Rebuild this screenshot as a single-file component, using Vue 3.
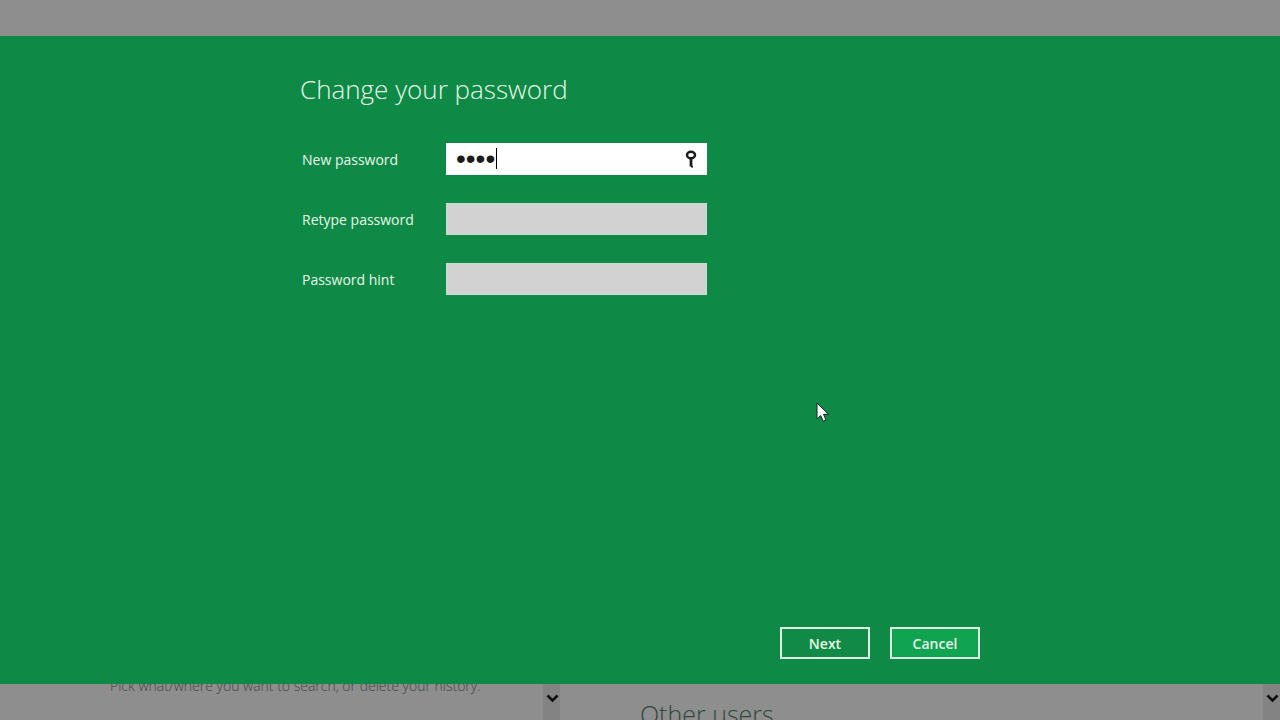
<script setup>
import { ref } from 'vue'

const password = ref('abcd')
const retype = ref('')
const hint = ref('')
</script>

<template>
  <div class="screen">
    <main class="dialog">
      <form class="content" @submit.prevent>
        <h1>Change your password</h1>
        <div class="row">
          <label for="new-password">New password</label>
          <div class="field">
            <input id="new-password" v-model="password" class="active" type="password" />
            <span class="caret"></span>
            <button class="reveal" type="button" aria-label="Show password">
              <svg width="12" height="18" viewBox="0 0 12 18" fill="none" stroke="#1c1c1c">
                <ellipse cx="6" cy="5" rx="4" ry="3.3" stroke-width="2.5" />
                <path d="M6 8V16.500" stroke-width="2.800" />
                <path d="M6 16.600H8" stroke-width="1.600" />
              </svg>
            </button>
          </div>
        </div>
        <div class="row">
          <label for="retype">Retype password</label>
          <div class="field"><input id="retype" v-model="retype" type="password" /></div>
        </div>
        <div class="row">
          <label for="hint">Password hint</label>
          <div class="field"><input id="hint" v-model="hint" type="text" /></div>
        </div>
        <div class="actions">
          <button class="action" type="submit">Next</button>
          <button class="action hover" type="button">Cancel</button>
        </div>
      </form>
    </main>
    <div class="behind">
      <section class="search-pane">
        <p>Pick what/where you want to search, or delete your history.</p>
      </section>
      <div class="scroll">
        <svg width="13" height="9" viewBox="0 0 13 9"><path d="M1.500 1.500L6.500 6.500L11.500 1.500" fill="none" stroke="#0c0c0c" stroke-width="2.600" /></svg>
      </div>
      <section class="users-pane">
        <h2>Other users</h2>
      </section>
      <div class="scroll">
        <svg width="13" height="9" viewBox="0 0 13 9"><path d="M1.500 1.500L6.500 6.500L11.500 1.500" fill="none" stroke="#0c0c0c" stroke-width="2.600" /></svg>
      </div>
    </div>
    <svg class="pointer" width="14" height="21" viewBox="0 0 14 21">
      <path d="M1 1V17L4.700 13.500L7.200 19.300L10 18L7.500 12.300H12.500Z" fill="#fff" stroke="#12271b" stroke-width="1" />
    </svg>
  </div>
</template>

<style>
body {
  margin: 0;
}
</style>

<style scoped>
.screen {
  position: relative;
  display: grid;
  grid-template-rows: 36px 1fr 36px;
  height: 100vh;
  overflow: hidden;
  background: #8e8e8e;
  font-family: "Open Sans", "Noto Sans", sans-serif;
}
.dialog {
  grid-row: 2;
  display: flex;
  justify-content: center;
  background: #0e8a46;
  color: #e6f8ea;
}
.content {
  display: flex;
  flex-direction: column;
  width: 680px;
  padding: 35px 20px 25px;
}
h1 {
  margin: 0 0 36px;
  font-size: 26px;
  line-height: 36px;
  font-weight: 300;
}
.row {
  display: flex;
  align-items: center;
  margin-bottom: 28px;
}
label {
  width: 144px;
  padding: 2px 0 0 2px;
  box-sizing: border-box;
  font-size: 14px;
  line-height: 20px;
}
.field {
  position: relative;
  width: 261px;
  margin-left: 2px;
}
input {
  display: block;
  box-sizing: border-box;
  width: 100%;
  height: 32px;
  padding: 0 30px 0 9px;
  border: 1px solid #c9dccd;
  border-radius: 0;
  outline: none;
  background: #d2d2d2;
  color: #1c1c1c;
  font: 16px "Open Sans", sans-serif;
}
input.active {
  border-color: #fff;
  background: #fff;
  font: 28px "Liberation Sans", sans-serif;
}
.caret {
  position: absolute;
  top: 5px;
  left: 50px;
  width: 1px;
  height: 21px;
  background: #000;
}
.reveal {
  position: absolute;
  top: 0;
  right: 0;
  display: grid;
  place-items: center;
  width: 32px;
  height: 32px;
  padding: 0;
  border: 0;
  background: none;
}
.actions {
  display: flex;
  justify-content: flex-end;
  gap: 20px;
  margin-top: auto;
}
.action {
  width: 90px;
  height: 32px;
  padding: 0;
  border: 2px solid #dcf5e2;
  border-radius: 0;
  background: #108a46;
  color: #e6f8ea;
  font: 600 14px "Open Sans", sans-serif;
}
.action.hover {
  background: #10a452;
}
.behind {
  grid-row: 3;
  display: grid;
  grid-template-columns: 543fr 17px 703fr 17px;
  overflow: hidden;
}
.search-pane {
  padding-left: 110px;
}
.search-pane p {
  margin: -8px 0 0;
  color: #444;
  font-size: 14px;
  font-weight: 300;
  line-height: 20px;
  white-space: nowrap;
}
.users-pane {
  padding-left: 80px;
}
h2 {
  margin: 12px 0 0;
  color: #30483a;
  font-size: 25px;
  line-height: 36px;
  font-weight: 300;
}
.scroll {
  display: flex;
  justify-content: center;
  padding: 10px 0 0 1px;
  box-sizing: border-box;
  background: #838383;
}
.pointer {
  position: absolute;
  top: 402px;
  left: 816px;
}
</style>
